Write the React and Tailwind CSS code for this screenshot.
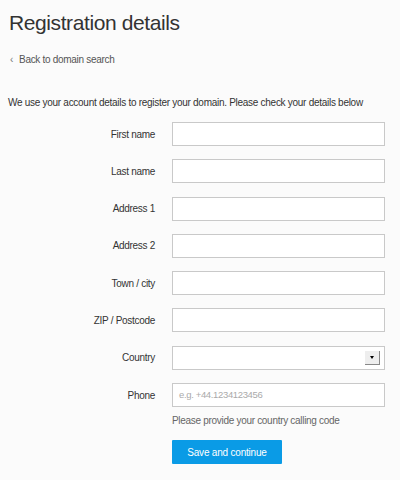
import React from 'react';

const fields = [
  { label: 'First name' },
  { label: 'Last name' },
  { label: 'Address 1' },
  { label: 'Address 2' },
  { label: 'Town / city' },
  { label: 'ZIP / Postcode' },
  { label: 'Country', select: true },
  { label: 'Phone', placeholder: 'e.g. +44.1234123456' },
];

function Field({ label, select, placeholder }) {
  return (
    <div className="flex items-center h-[24px]">
      <label className="w-[155px] text-right text-[10px] tracking-[-0.3px] text-[#333]">{label}</label>
      <div className="ml-[17px] w-[213px] h-[24px] border border-[#c9c9c9] bg-white flex items-center px-[6px]">
        {placeholder && <span className="text-[9.5px] tracking-[-0.35px] text-[#aaa]">{placeholder}</span>}
        {select && (
          <div className="ml-auto -mr-[2px] w-[15px] h-[14px] bg-[#eeeeee] border-r border-b border-[#888] flex items-center justify-center">
            <div className="w-0 h-0 border-l-[2.5px] border-r-[2.5px] border-t-[3px] border-l-transparent border-r-transparent border-t-black" />
          </div>
        )}
      </div>
    </div>
  );
}

export default function App() {
  return (
    <div className="w-[400px] h-[480px] bg-[#fbfbfb] overflow-hidden" style={{ fontFamily: '"Liberation Sans", Arial, sans-serif' }}>
      <h1 className="pl-[9px] pt-[11px] text-[21px] leading-[24px] text-[#333] tracking-[-0.4px]">Registration details</h1>
      <div className="mt-[17px] pl-[10px] flex items-center h-[14px] text-[10px] tracking-[-0.3px] text-[#555]">
        <span className="text-[10px] text-[#777] mr-[6px]">‹</span>
        <span>Back to domain search</span>
      </div>
      <p className="mt-[30px] pl-[8px] whitespace-nowrap text-[10px] leading-[14px] tracking-[-0.28px] text-[#333]">
        We use your account details to register your domain. Please check your details below
      </p>
      <div className="mt-[12px] flex flex-col gap-[13.3px]">
        {fields.map((f) => (
          <Field key={f.label} {...f} />
        ))}
      </div>
      <div className="ml-[172px] mt-[6px] text-[10px] tracking-[-0.3px] text-[#666]">Please provide your country calling code</div>
      <button className="ml-[172px] mt-[12px] w-[110px] h-[24px] bg-[#0a9be6] text-white text-[10px] tracking-[-0.2px] font-medium rounded-[1px]">
        Save and continue
      </button>
    </div>
  );
}
